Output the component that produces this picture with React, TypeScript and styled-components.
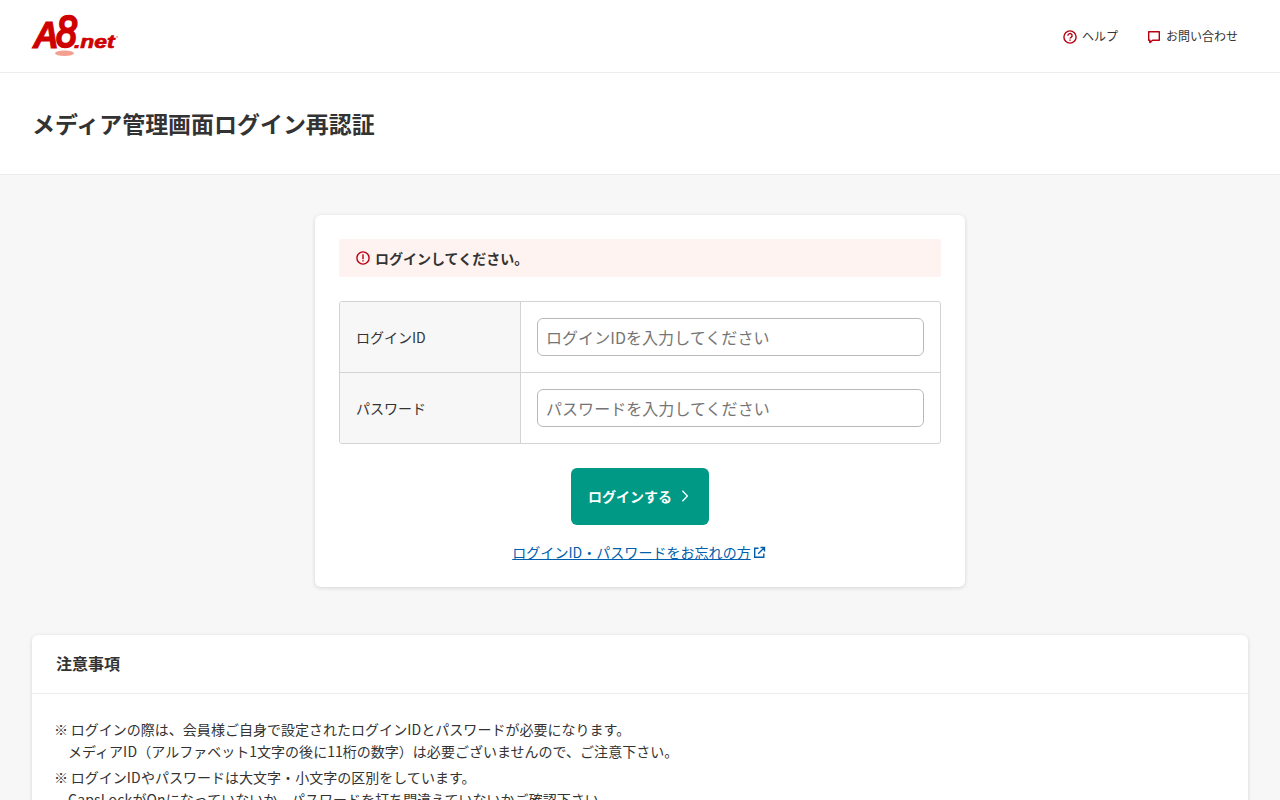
import React from "react";
import styled, { createGlobalStyle } from "styled-components";

const Global = createGlobalStyle`
  * { box-sizing: border-box; }
  html, body { margin: 0; height: 100%; overflow: hidden; }
  body {
    background: #f7f7f7;
    color: #333;
    font-family: "Noto Sans CJK JP", sans-serif;
    font-size: 14px;
    line-height: 22px;
  }
`;

const Header = styled.header`
  display: flex;
  align-items: center;
  justify-content: space-between;
  height: 73px;
  padding: 0 42px 0 32px;
  background: #fff;
  border-bottom: 1px solid #ececec;
`;

const Logo = styled.svg`
  display: block;
  width: 88px;
  height: 42px;
  overflow: visible;
`;

const Nav = styled.nav`
  display: flex;
  gap: 28px;
`;

const NavItem = styled.a`
  display: flex;
  align-items: flex-end;
  gap: 4px;
  font-size: 12px;
  line-height: 18px;
`;

const Icon = styled.svg<{ $size: number }>`
  display: block;
  flex: none;
  width: ${(p) => p.$size}px;
  height: ${(p) => p.$size}px;
  fill: none;
  stroke: currentColor;
`;

const RedIcon = styled(Icon)`
  color: #b80012;
`;

const TitleBar = styled.div`
  height: 102px;
  padding: 33px 32px 0;
  background: #fff;
  border-bottom: 1px solid #ececec;
`;

const Title = styled.h1`
  margin: 0;
  font-size: 22.96px;
  line-height: 34px;
  font-weight: 700;
`;

const Main = styled.main`
  padding: 40px 32px;
`;

const Card = styled.section`
  background: #fff;
  border-radius: 6px;
  box-shadow: 0 1px 4px rgba(0, 0, 0, 0.14);
`;

const LoginCard = styled(Card)`
  display: flex;
  flex-direction: column;
  align-items: center;
  width: 650px;
  height: 372px;
  margin: 0 auto 48px;
  padding: 24px;
`;

const Alert = styled.p`
  display: flex;
  align-items: center;
  gap: 4px;
  align-self: stretch;
  height: 38px;
  margin: 0 0 24px;
  padding: 0 16px;
  background: #fff3f1;
  border-radius: 2px;
  font-weight: 700;
`;

const Fields = styled.div`
  align-self: stretch;
  border: 1px solid #d3d3d3;
  border-radius: 3px;
  overflow: hidden;
`;

const Field = styled.label`
  display: grid;
  grid-template-columns: 181px 1fr;
  height: 70px;

  & + & {
    height: 71px;
    border-top: 1px solid #d3d3d3;
  }
`;

const FieldName = styled.span`
  display: flex;
  align-items: center;
  padding-left: 16px;
  background: #f7f7f7;
  border-right: 1px solid #d3d3d3;
`;

const FieldBody = styled.span`
  display: flex;
  align-items: center;
  padding: 0 16px;
`;

const Input = styled.input`
  width: 100%;
  height: 38px;
  padding: 0 8px;
  border: 1px solid #b9b9b9;
  border-radius: 6px;
  background: #fff;
  font: inherit;
  font-size: 16px;

  &::placeholder {
    color: #757575;
    letter-spacing: 0.05px;
  }
`;

const Submit = styled.button`
  display: flex;
  align-items: center;
  gap: 5px;
  width: 138px;
  height: 57px;
  margin: 24px 0 16px;
  padding: 0 16px 1px 17px;
  border: 0;
  border-radius: 6px;
  background: #009985;
  color: #fff;
  font: inherit;
  font-weight: 700;
`;

const Forgot = styled.a`
  display: flex;
  align-items: center;
  gap: 2px;
  margin-right: 2px;
  color: #005fac;
  letter-spacing: 0.04px;

  span {
    text-decoration: underline;
  }
`;

const NotesTitle = styled.h2`
  height: 59px;
  margin: 0;
  padding: 0 24px;
  border-bottom: 1px solid #ececec;
  font-size: 16px;
  line-height: 56px;
`;

const Notes = styled.ul`
  margin: 0;
  padding: 24px 22px;
  list-style: none;
`;

const Note = styled.li`
  margin-bottom: 4px;
  padding-left: 14px;
  text-indent: -14px;
  word-spacing: -0.5px;
  letter-spacing: 0.02px;
`;

const Latin = styled.span`
  letter-spacing: 0.2px;
`;

const fields = [
  { name: "ログインID", type: "text", hint: "ログインIDを入力してください" },
  { name: "パスワード", type: "password", hint: "パスワードを入力してください" },
];

function A8Logo() {
  return (
    <Logo viewBox="0 0 88 42" role="img" aria-label="A8.net">
      <ellipse cx="32.5" cy="38.2" rx="9.5" ry="2.8" fill="#f3a091" />
      <g
        fill="#cf0000"
        stroke="#cf0000"
        fontFamily="'Liberation Sans', sans-serif"
        fontStyle="italic"
      >
        <text x="1" y="33" fontSize="36" fontWeight="700" strokeWidth="1" textLength="26" lengthAdjust="spacingAndGlyphs">A</text>
        <text x="24.3" y="32.3" fontSize="43.5" fontWeight="400" strokeWidth="2.6" textLength="20.5" lengthAdjust="spacingAndGlyphs">8</text>
        <text x="42" y="33" fontSize="18.5" fontWeight="700" strokeWidth="0.7" textLength="40.5" lengthAdjust="spacingAndGlyphs">.net</text>
      </g>
      <circle cx="85" cy="22" r="0.8" fill="#dc6060" />
    </Logo>
  );
}

export default function App() {
  return (
    <>
      <Global />
      <Header>
        <A8Logo />
        <Nav>
          <NavItem>
            <RedIcon $size={16} viewBox="0 0 16 16" strokeWidth="1.4">
              <circle cx="8" cy="8" r="6.1" />
              <path d="M5.9 6.7a2.1 2 0 1 1 3.2 1.6c-.8.5-1.1.7-1.1 1.3M8 10.4v1.3" />
            </RedIcon>
            ヘルプ
          </NavItem>
          <NavItem>
            <RedIcon $size={16} viewBox="0 0 16 16" strokeWidth="1.4">
              <path d="M2.7 2.7h10.6v8.6H6.6l-2.7 2.3v-2.3H2.7z" strokeLinejoin="round" />
            </RedIcon>
            お問い合わせ
          </NavItem>
        </Nav>
      </Header>
      <TitleBar>
        <Title>メディア管理画面ログイン再認証</Title>
      </TitleBar>
      <Main>
        <LoginCard>
          <Alert>
            <RedIcon $size={16} viewBox="0 0 16 16" strokeWidth="1.4">
              <circle cx="8" cy="8" r="6.1" />
              <path d="M8 4.2v5M8 10.2v1.4" />
            </RedIcon>
            ログインしてください。
          </Alert>
          <Fields>
            {fields.map((f) => (
              <Field key={f.name}>
                <FieldName>{f.name}</FieldName>
                <FieldBody>
                  <Input type={f.type} placeholder={f.hint} />
                </FieldBody>
              </Field>
            ))}
          </Fields>
          <Submit>
            ログインする
            <Icon $size={16} viewBox="0 0 16 16" strokeWidth="1.3">
              <path d="M5.4 2.8l5 5.2-5 5.2" />
            </Icon>
          </Submit>
          <Forgot>
            <span>ログインID・パスワードをお忘れの方</span>
            <Icon $size={13} viewBox="0 0 13 13" strokeWidth="1.4">
              <path d="M5.5 2.2H1.7v9.1h9.1V7.5M7.5 1.5h4v4M11.3 1.7L5.2 7.8" />
            </Icon>
          </Forgot>
        </LoginCard>
        <Card>
          <NotesTitle>注意事項</NotesTitle>
          <Notes>
            <Note>
              ※ ログインの際は、会員様ご自身で設定されたログイン<Latin>ID</Latin>とパスワードが必要になります。
              <br />
              メディア<Latin>ID</Latin>（アルファベット1文字の後に11桁の数字）は必要ございませんので、ご注意下さい。
            </Note>
            <Note>
              ※ ログイン<Latin>ID</Latin>やパスワードは大文字・小文字の区別をしています。
              <br />
              <Latin>CapsLock</Latin>が<Latin>On</Latin>になっていないか、パスワードを打ち間違えていないかご確認下さい。
            </Note>
          </Notes>
        </Card>
      </Main>
    </>
  );
}
